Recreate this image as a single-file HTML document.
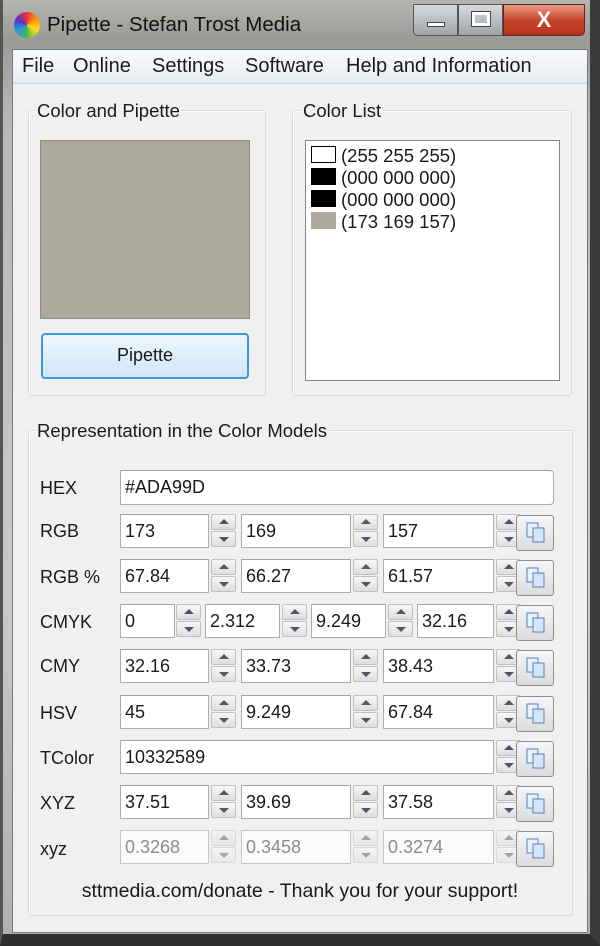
<!DOCTYPE html>
<html><head><meta charset="utf-8"><style>
*{margin:0;padding:0;box-sizing:border-box}
body{width:600px;height:946px;position:relative;overflow:hidden;background:#8a8a86;font-family:"Liberation Sans",sans-serif;color:#1a1a1a}
.a{position:absolute}
#frame{left:0;top:0;width:600px;height:946px;background:linear-gradient(180deg,#b4b5b1 0,#9a9b97 40px,#b7b8b4 120px,#c9cac7 600px,#aeb0ad 946px);border-right:10px solid #3a3a3a;border-bottom:12px solid #2e2e2e;border-left:3px solid #555}
#client{left:12px;top:49px;width:576px;height:884px;background:#f0f0f0;border:1px solid #6f7a86}
#menu{left:13px;top:50px;width:574px;height:34px;background:linear-gradient(#fafbfd,#e6ebf2);border-bottom:1px solid #c9d2de;font-size:20px}
#menu span{position:absolute;top:5px}
.grp{border:1px solid #d9d9d9;border-radius:3px;box-shadow:inset 1px 1px 0 #fff}
.lbl{font-size:18.5px;background:#f0f0f0;padding:0 2px}
.f{background:#fff;border:1px solid #abadb3;border-top-color:#9ea2a8;font-size:18px;padding:6px 0 0 4px;height:34px}
.dis{color:#8c8c8c;background:#fbfbfb;border-color:#c5c5c5}
.sp{width:25px;height:34px}
.sp i{position:absolute;left:0;width:25px;height:16px;background:linear-gradient(#f7f7f7,#dedede);border:1px solid #c0c0c0;border-radius:2px}
.sp i:after{content:"";position:absolute;left:7px;border-left:5px solid transparent;border-right:5px solid transparent}
.sp i.u{top:0}.sp i.u:after{top:4px;border-bottom:5px solid #556}
.sp i.d{top:17px}.sp i.d:after{top:5px;border-top:5px solid #556}
.cp{width:38px;height:36px;border:1px solid #8e8f8f;border-radius:3px;background:linear-gradient(#f6f6f6,#dcdcdc)}
.rl{font-size:18px;left:40px}
</style></head><body>
<div class="a" id="frame"></div>
<div class="a" style="left:14px;top:12px;width:26px;height:26px;border-radius:50%;background:conic-gradient(#e33,#f90,#fd2,#4b4,#29d,#53c,#e33)"></div>
<div class="a" style="left:47px;top:13px;font-size:20.5px;color:#111">Pipette - Stefan Trost Media</div>
<div class="a" style="left:413px;top:4px;width:45px;height:32px;border:1px solid #555;border-radius:0 0 0 5px;background:linear-gradient(#d8dadc,#9ea3a8)"><div class="a" style="left:13px;top:17px;width:18px;height:5px;background:#fff;border:1px solid #444"></div></div>
<div class="a" style="left:458px;top:4px;width:45px;height:32px;border:1px solid #555;background:linear-gradient(#d8dadc,#9ea3a8)"><div class="a" style="left:13px;top:7px;width:18px;height:14px;border:3px solid #fff;outline:1px solid #444"></div></div>
<div class="a" style="left:503px;top:4px;width:82px;height:32px;border:1px solid #5a2a22;border-radius:0 0 5px 0;background:linear-gradient(#e89a85,#c7452c 50%,#b83118);color:#fff;font-size:22px;font-weight:bold;text-align:center;line-height:30px">X</div>
<div class="a" id="client"></div>
<div class="a" id="menu"><span style="left:9px">File</span><span style="left:60px">Online</span><span style="left:139px">Settings</span><span style="left:232px">Software</span><span style="left:333px">Help and Information</span></div>

<div class="a grp" style="left:28px;top:110px;width:238px;height:286px"></div>
<div class="a lbl" style="left:35px;top:100px">Color and Pipette</div>
<div class="a" style="left:40px;top:140px;width:210px;height:179px;background:#ADA99D;border:1px solid #8f8c83"></div>
<div class="a" style="left:41px;top:333px;width:208px;height:46px;border:2px solid #3c9ad8;border-radius:4px;background:linear-gradient(#eef6fc,#cfe6f6);font-size:18px;text-align:center;line-height:41px">Pipette</div>

<div class="a grp" style="left:292px;top:110px;width:280px;height:286px"></div>
<div class="a lbl" style="left:301px;top:100px">Color List</div>
<div class="a" style="left:305px;top:140px;width:255px;height:241px;background:#fff;border:1px solid #828790;font-size:18.5px">
<div class="a" style="left:5px;top:5px;width:25px;height:17px;border:1px solid #000;background:#fff"></div><div class="a" style="left:35px;top:4px">(255 255 255)</div>
<div class="a" style="left:5px;top:27px;width:25px;height:17px;background:#000"></div><div class="a" style="left:35px;top:26px">(000 000 000)</div>
<div class="a" style="left:5px;top:49px;width:25px;height:17px;background:#000"></div><div class="a" style="left:35px;top:48px">(000 000 000)</div>
<div class="a" style="left:5px;top:71px;width:25px;height:17px;background:#ADA99D"></div><div class="a" style="left:35px;top:70px">(173 169 157)</div>
</div>

<div class="a grp" style="left:28px;top:430px;width:545px;height:486px"></div>
<div class="a lbl" style="left:35px;top:420px">Representation in the Color Models</div>

<div class="a rl" style="top:478px">HEX</div>
<div class="a f" style="left:120px;top:470px;width:434px;height:35px;border-radius:0 4px 4px 0">#ADA99D</div>

<div class="a rl" style="top:521px">RGB</div>
<div class="a f" style="left:120px;top:514px;width:89px">173</div><div class="a sp" style="left:211px;top:514px"><i class="u"></i><i class="d"></i></div>
<div class="a f" style="left:241px;top:514px;width:110px">169</div><div class="a sp" style="left:353px;top:514px"><i class="u"></i><i class="d"></i></div>
<div class="a f" style="left:383px;top:514px;width:111px">157</div><div class="a sp" style="left:496px;top:514px"><i class="u"></i><i class="d"></i></div>

<div class="a rl" style="top:567px">RGB %</div>
<div class="a f" style="left:120px;top:559px;width:89px">67.84</div><div class="a sp" style="left:211px;top:559px"><i class="u"></i><i class="d"></i></div>
<div class="a f" style="left:241px;top:559px;width:110px">66.27</div><div class="a sp" style="left:353px;top:559px"><i class="u"></i><i class="d"></i></div>
<div class="a f" style="left:383px;top:559px;width:111px">61.57</div><div class="a sp" style="left:496px;top:559px"><i class="u"></i><i class="d"></i></div>

<div class="a rl" style="top:612px">CMYK</div>
<div class="a f" style="left:120px;top:604px;width:55px">0</div><div class="a sp" style="left:176px;top:604px"><i class="u"></i><i class="d"></i></div>
<div class="a f" style="left:205px;top:604px;width:75px">2.312</div><div class="a sp" style="left:282px;top:604px"><i class="u"></i><i class="d"></i></div>
<div class="a f" style="left:311px;top:604px;width:75px">9.249</div><div class="a sp" style="left:388px;top:604px"><i class="u"></i><i class="d"></i></div>
<div class="a f" style="left:417px;top:604px;width:77px">32.16</div><div class="a sp" style="left:496px;top:604px"><i class="u"></i><i class="d"></i></div>

<div class="a rl" style="top:656px">CMY</div>
<div class="a f" style="left:120px;top:649px;width:89px">32.16</div><div class="a sp" style="left:211px;top:649px"><i class="u"></i><i class="d"></i></div>
<div class="a f" style="left:241px;top:649px;width:110px">33.73</div><div class="a sp" style="left:353px;top:649px"><i class="u"></i><i class="d"></i></div>
<div class="a f" style="left:383px;top:649px;width:111px">38.43</div><div class="a sp" style="left:496px;top:649px"><i class="u"></i><i class="d"></i></div>

<div class="a rl" style="top:703px">HSV</div>
<div class="a f" style="left:120px;top:695px;width:89px">45</div><div class="a sp" style="left:211px;top:695px"><i class="u"></i><i class="d"></i></div>
<div class="a f" style="left:241px;top:695px;width:110px">9.249</div><div class="a sp" style="left:353px;top:695px"><i class="u"></i><i class="d"></i></div>
<div class="a f" style="left:383px;top:695px;width:111px">67.84</div><div class="a sp" style="left:496px;top:695px"><i class="u"></i><i class="d"></i></div>

<div class="a rl" style="top:748px">TColor</div>
<div class="a f" style="left:120px;top:740px;width:374px">10332589</div><div class="a sp" style="left:496px;top:740px"><i class="u"></i><i class="d"></i></div>

<div class="a rl" style="top:793px">XYZ</div>
<div class="a f" style="left:120px;top:785px;width:89px">37.51</div><div class="a sp" style="left:211px;top:785px"><i class="u"></i><i class="d"></i></div>
<div class="a f" style="left:241px;top:785px;width:110px">39.69</div><div class="a sp" style="left:353px;top:785px"><i class="u"></i><i class="d"></i></div>
<div class="a f" style="left:383px;top:785px;width:111px">37.58</div><div class="a sp" style="left:496px;top:785px"><i class="u"></i><i class="d"></i></div>

<div class="a rl" style="top:839px">xyz</div>
<div class="a f dis" style="left:120px;top:830px;width:89px">0.3268</div><div class="a sp" style="left:211px;top:830px;opacity:.5"><i class="u"></i><i class="d"></i></div>
<div class="a f dis" style="left:241px;top:830px;width:110px">0.3458</div><div class="a sp" style="left:353px;top:830px;opacity:.5"><i class="u"></i><i class="d"></i></div>
<div class="a f dis" style="left:383px;top:830px;width:111px">0.3274</div><div class="a sp" style="left:496px;top:830px;opacity:.5"><i class="u"></i><i class="d"></i></div>

<div class="a cp" style="left:516px;top:515px"></div>
<div class="a cp" style="left:516px;top:560px"></div>
<div class="a cp" style="left:516px;top:605px"></div>
<div class="a cp" style="left:516px;top:650px"></div>
<div class="a cp" style="left:516px;top:696px"></div>
<div class="a cp" style="left:516px;top:741px"></div>
<div class="a cp" style="left:516px;top:786px"></div>
<div class="a cp" style="left:516px;top:831px"></div>
<svg class="a" style="left:0;top:0" width="600" height="946">
<defs><g id="ic"><rect x="0" y="0" width="11" height="14" fill="#e8f0fb" stroke="#5a7fb8"/><rect x="6" y="5" width="11" height="14" fill="#d5e4f7" stroke="#5a7fb8"/></g></defs>
<use href="#ic" x="527" y="523"/><use href="#ic" x="527" y="568"/><use href="#ic" x="527" y="613"/><use href="#ic" x="527" y="658"/>
<use href="#ic" x="527" y="704"/><use href="#ic" x="527" y="749"/><use href="#ic" x="527" y="794"/><use href="#ic" x="527" y="839"/>
</svg>

<div class="a" style="left:0;width:600px;top:880px;text-align:center;font-size:19.5px">sttmedia.com/donate - Thank you for your support!</div>
</body></html>
